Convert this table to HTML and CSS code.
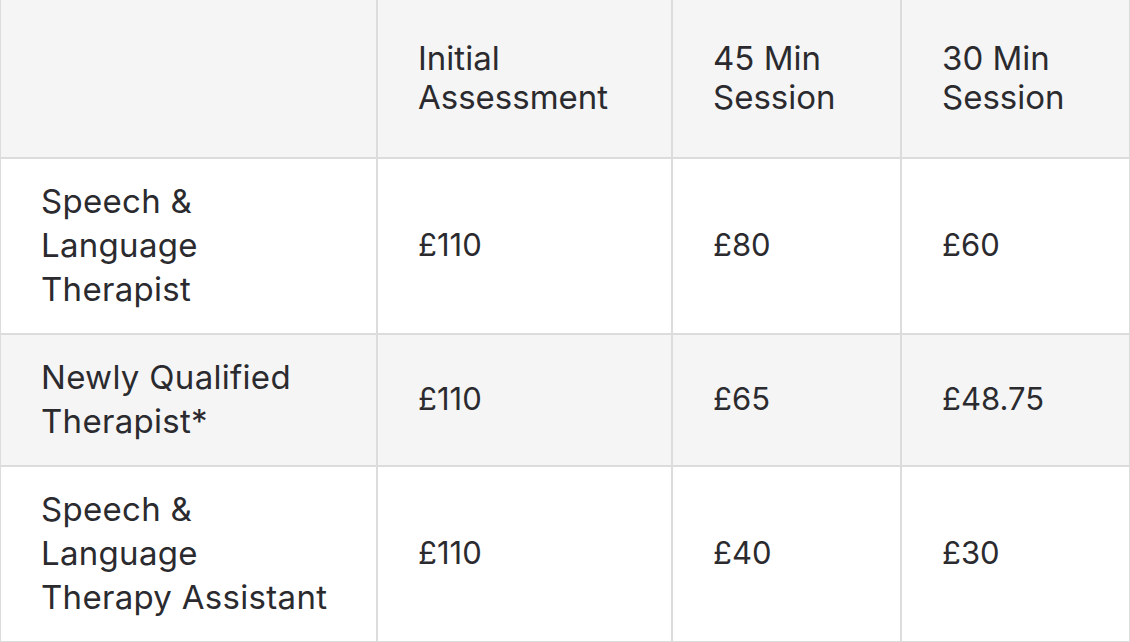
FILE: index.html
```html
<!DOCTYPE html>
<html lang="en">
<head>
<meta charset="utf-8">
<title>Pricing</title>
<link rel="stylesheet" href="styles.css">
</head>
<body>
<table class="prices">
  <colgroup>
    <col class="c-role">
    <col class="c-init">
    <col class="c-45">
    <col class="c-30">
  </colgroup>
  <thead>
    <tr>
      <th></th>
      <th>Initial<br>Assessment</th>
      <th>45 Min<br>Session</th>
      <th>30 Min<br>Session</th>
    </tr>
  </thead>
  <tbody>
    <tr>
      <td class="role">Speech &amp;<br>Language<br>Therapist</td>
      <td class="price">£110</td>
      <td class="price">£80</td>
      <td class="price">£60</td>
    </tr>
    <tr class="alt">
      <td class="role">Newly Qualified<br>Therapist*</td>
      <td class="price">£110</td>
      <td class="price">£65</td>
      <td class="price">£48.75</td>
    </tr>
    <tr>
      <td class="role">Speech &amp;<br>Language<br>Therapy Assistant</td>
      <td class="price">£110</td>
      <td class="price">£40</td>
      <td class="price">£30</td>
    </tr>
  </tbody>
</table>
</body>
</html>
```
FILE: styles.css
```css
html, body {
  margin: 0;
  padding: 0;
  background: #ffffff;
}

.prices {
  width: 1130px;
  table-layout: fixed;
  border-collapse: separate;
  border-spacing: 0;
  font-family: "Inter", "Noto Sans", sans-serif;
  color: #2b2b2f;
}

.c-role { width: 377px; }
.c-init { width: 295px; }
.c-45 { width: 229px; }
.c-30 { width: 229px; }

.prices th,
.prices td {
  box-sizing: border-box;
  border: 1px solid #dcdcdc;
  text-align: left;
  vertical-align: middle;
  padding: 20px 40px 22px;
  font-weight: 400;
  line-height: 44px;
}

.prices thead th {
  background: #f5f5f5;
  border-top: none;
  padding-top: 39px;
  padding-bottom: 41px;
  font-size: 33px;
  line-height: 38.5px;
}

.prices tr.alt td {
  background: #f5f5f5;
}

.prices td.role {
  font-size: 33px;
  letter-spacing: 0.3px;
}

.prices td.price {
  font-size: 31px;
}
```
